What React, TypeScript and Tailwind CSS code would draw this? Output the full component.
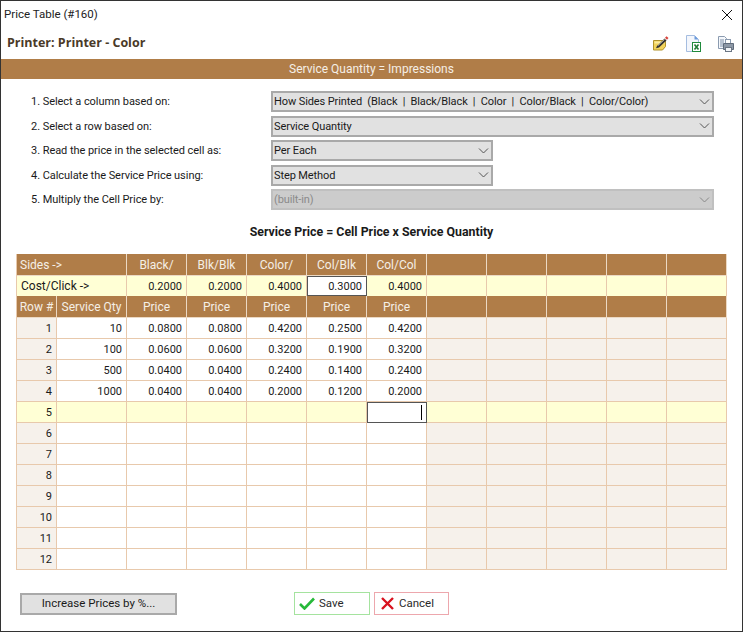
import React from "react";

const F = "font-['Roboto','Open_Sans',sans-serif]";

function Chev({ c = "#555" }: { c?: string }) {
  return (
    <svg width="11" height="6" viewBox="0 0 11 6" fill="none">
      <path d="M1 .5 5.500 5 10 .5" stroke={c} strokeWidth="1" />
    </svg>
  );
}

function Select({ text, w, disabled }: { text: React.ReactNode; w: string; disabled?: boolean }) {
  return (
    <div
      className={`${w} h-[21px] border-2 flex items-center justify-between pl-[1px] pr-[2px] text-[11px] tracking-[-0.1px] ${
        disabled ? "bg-[#cccccc] border-[#c0c0c0] text-[#8a8a8a]" : "bg-[#e1e1e1] border-[#a9a9a9] text-[#1a1a1a]"
      }`}
    >
      <span className="whitespace-pre">{text}</span>
      <Chev c={disabled ? "#888" : "#555"} />
    </div>
  );
}

function Row({ label, children }: { label: string; children: React.ReactNode }) {
  return (
    <div className="flex items-center h-[24.500px]">
      <div className="w-[270px] pl-[30px] text-[#1a1a1a] whitespace-nowrap text-[11px] tracking-[-0.05px]">{label}</div>
      {children}
    </div>
  );
}

const cols = "grid grid-cols-[40px_70px_repeat(10,60px)]";
const H = "bg-[#b07d48] text-[#f5efe6] border-r border-b border-[#ecd9c4] flex items-center justify-center";

const data: [string, string, string, string, string, string, string][] = [
  ["1", "10", "0.0800", "0.0800", "0.4200", "0.2500", "0.4200"],
  ["2", "100", "0.0600", "0.0600", "0.3200", "0.1900", "0.3200"],
  ["3", "500", "0.0400", "0.0400", "0.2400", "0.1400", "0.2400"],
  ["4", "1000", "0.0400", "0.0400", "0.2000", "0.1200", "0.2000"],
  ["5", "", "", "", "", "", ""],
  ["6", "", "", "", "", "", ""],
  ["7", "", "", "", "", "", ""],
  ["8", "", "", "", "", "", ""],
  ["9", "", "", "", "", "", ""],
  ["10", "", "", "", "", "", ""],
  ["11", "", "", "", "", "", ""],
  ["12", "", "", "", "", "", ""],
];

const B = "border-r border-b border-[#e8c9ac] flex items-center justify-end pr-[4px] text-[#1a1a1a] text-[11px]";

function Table() {
  return (
    <div className="w-[711px] ml-[15px] border-l border-[#e8c9ac]">
      <div className={`${cols} h-[22px]`}>
        <div className={`${H} col-span-2 !justify-start pl-[3px]`}>{"Sides ->"}</div>
        {["Black/", "Blk/Blk", "Color/", "Col/Blk", "Col/Col", "", "", "", "", ""].map((t, i) => (
          <div key={i} className={H}>{t}</div>
        ))}
      </div>
      <div className={`${cols} h-[20px] bg-[#ffffd5] text-[11px]`}>
        <div className="col-span-2 flex items-center pl-[4px] text-[#1a1a1a] border-r border-[#e8c9ac] text-[12px]">{"Cost/Click ->"}</div>
        {["0.2000", "0.2000", "0.4000", "0.3000", "0.4000", "", "", "", "", ""].map((t, i) =>
          i === 3 ? (
            <div key={i} className="bg-white border border-[#555] flex items-center justify-end pr-[4px] text-[#1a1a1a]">{t}</div>
          ) : (
            <div key={i} className="border-r border-[#e8c9ac] flex items-center justify-end pr-[4px] text-[#1a1a1a]">{t}</div>
          )
        )}
      </div>
      <div className={`${cols} h-[22px]`}>
        <div className={H}>Row #</div>
        <div className={H}>Service Qty</div>
        {["Price", "Price", "Price", "Price", "Price", "", "", "", "", ""].map((t, i) => (
          <div key={i} className={H}>{t}</div>
        ))}
      </div>
      {data.map((r, ri) => {
        const yellow = ri === 4;
        return (
          <div key={ri} className={`${cols} h-[21px] ${yellow ? "bg-[#ffffd5]" : ""}`}>
            <div className={`${B} ${yellow ? "" : "bg-[#f6f1eb]"}`}>{r[0]}</div>
            <div className={B}>{r[1]}</div>
            {r.slice(2).map((v, i) =>
              yellow && i === 4 ? (
                <div key={i} className="bg-white border border-[#555] flex items-center justify-end pr-[4px]">
                  <div className="w-px h-[15px] bg-black" />
                </div>
              ) : (
                <div key={i} className={B}>{v}</div>
              )
            )}
            {[0, 1, 2, 3, 4].map((i) => (
              <div key={i} className={`${B} ${yellow ? "" : "bg-[#f6f1eb]"}`} />
            ))}
          </div>
        );
      })}
    </div>
  );
}

function NoteIcon() {
  return (
    <svg width="16" height="15" viewBox="0 0 16 15">
      <path d="M.5 4.500h12v6l-3 3.500h-9z" fill="#f2d35a" stroke="#b0922a" />
      <path d="M1.500 5.500h10v2h-10z" fill="#fbeb9f" />
      <path d="M4 10 11.500 2.500l2 2L6 11.500l-3 .7z" fill="#333" />
      <path d="M5 9.500 11.500 3.300" stroke="#f5f0d0" strokeWidth=".8" />
      <path d="M12 1.800 13.500.3 15.500 2l-1.500 1.700z" fill="#d9433c" />
    </svg>
  );
}

function ExcelIcon() {
  return (
    <svg width="15" height="17" viewBox="0 0 15 17">
      <path d="M.5.500h8l4 4v12h-12z" fill="#f3f6fc" stroke="#a5bde0" />
      <path d="M8.500.500v4h4z" fill="#6d9bdc" />
      <rect x="6.500" y="7.500" width="8" height="9" fill="#fff" stroke="#1f8a3c" />
      <path d="M8.500 9.500l4 5M12.500 9.500l-4 5" stroke="#1f7a34" strokeWidth="1.600" />
    </svg>
  );
}

function PrintIcon() {
  return (
    <svg width="16" height="16" viewBox="0 0 16 16">
      <path d="M.5.500h6l2 2v10h-8z" fill="#f4f7fb" stroke="#8b9bb0" />
      <path d="M2 4h4M2 6h4M2 8h3M2 10h3" stroke="#7d8ea6" />
      <rect x="7.500" y="3.500" width="5" height="4" fill="#fff" stroke="#8b9bb0" />
      <path d="M5.500 7.500h10v6h-10z" fill="#8d98a6" stroke="#5f6b7a" />
      <rect x="7.500" y="11.500" width="6" height="4" fill="#f3f5f8" stroke="#6c7785" />
    </svg>
  );
}

export default function App() {
  return (
    <div className={`w-[743px] h-[632px] bg-white border border-[#333] relative overflow-hidden text-[12px] leading-none flex flex-col ${F}`}>
      <div className="h-[27px] flex items-center justify-between pl-[3px] pr-[9px] shrink-0">
        <span className="text-[#222] text-[11.500px]">Price Table (#160)</span>
        <svg width="12" height="12" viewBox="0 0 12 12"><path d="M1 1l10 10M11 1 1 11" stroke="#111" strokeWidth="1" /></svg>
      </div>
      <div className="h-[31px] flex items-center justify-between pl-[6px] pr-[8px] shrink-0">
        <span className="font-bold text-[#4a3a28] text-[12.500px] font-['Open_Sans']">Printer: Printer - Color</span>
        <div className="flex items-center gap-[17px]">
          <NoteIcon />
          <ExcelIcon />
          <PrintIcon />
        </div>
      </div>
      <div className="h-[20px] bg-[#b07d48] text-[#f5efe6] flex items-center justify-center shrink-0 text-[12px]">Service Quantity = Impressions</div>
      <div className="pt-[10.500px] shrink-0">
        <Row label="1. Select a column based on:">
          <Select w="w-[443px]" text="How Sides Printed  (Black  |  Black/Black  |  Color  |  Color/Black  |  Color/Color)" />
        </Row>
        <Row label="2. Select a row based on:">
          <Select w="w-[443px]" text="Service Quantity" />
        </Row>
        <Row label="3. Read the price in the selected cell as:">
          <Select w="w-[222px]" text="Per Each" />
        </Row>
        <Row label="4. Calculate the Service Price using:">
          <Select w="w-[222px]" text="Step Method" />
        </Row>
        <Row label="5. Multiply the Cell Price by:">
          <Select w="w-[443px]" disabled text="(built-in)" />
        </Row>
      </div>
      <div className="h-[22px] mt-[9.500px] flex items-center justify-center font-bold text-[#1a1a1a] text-[12.350px] shrink-0">
        Service Price = Cell Price x Service Quantity
      </div>
      <div className="mt-[10.500px] shrink-0"><Table /></div>
      <div className="flex items-center mt-[22px] pl-[19px] text-[11.500px]">
        <button className="w-[157px] h-[22px] bg-[#e1e1e1] border-2 border-[#a9a9a9] text-[#1a1a1a]">Increase Prices by %...</button>
        <button className="ml-[117px] w-[76px] h-[23px] border border-[#a5e39f] flex items-center pl-[4px] gap-[4px] text-[#2a2a2a] bg-white">
          <svg width="16" height="13" viewBox="0 0 16 13"><path d="M1 7l4.500 4.500L15 1.500" stroke="#27b93a" strokeWidth="2.600" fill="none" /></svg>
          Save
        </button>
        <button className="ml-[4px] w-[75px] h-[23px] border border-[#eda7ad] flex items-center pl-[6px] gap-[5px] text-[#2a2a2a] bg-white">
          <svg width="13" height="13" viewBox="0 0 13 13"><path d="M1 1l11 11M12 1 1 12" stroke="#d8121f" strokeWidth="2.400" fill="none" /></svg>
          Cancel
        </button>
      </div>
    </div>
  );
}
